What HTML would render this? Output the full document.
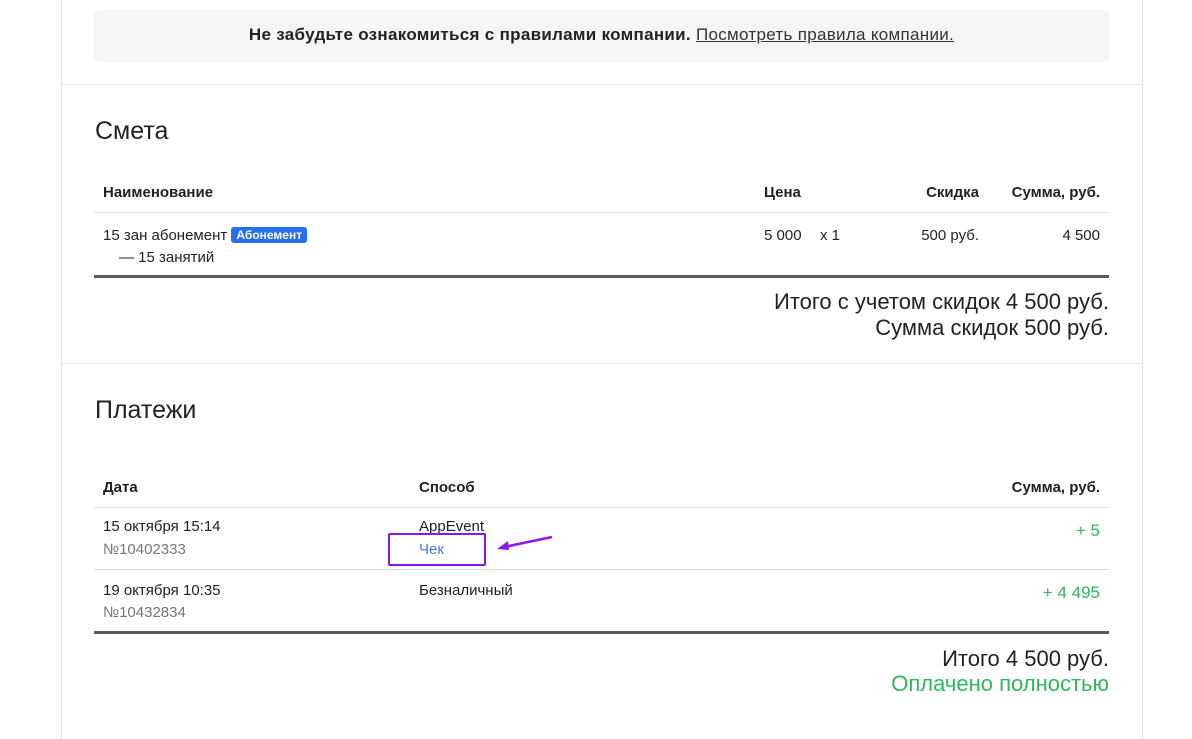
<!DOCTYPE html>
<html><head><meta charset="utf-8"><style>
body{margin:0;width:1192px;height:733px;overflow:hidden;background:#fff;font-family:"Liberation Sans",Arial,sans-serif;color:#222;position:relative}
.card{position:absolute;left:61px;top:-1px;width:1080px;height:740px;border-left:1px solid #e3e3e3;border-right:1px solid #e3e3e3}
.abs{position:absolute;white-space:nowrap}
.notice{position:absolute;left:94px;top:10px;width:1015px;height:52px;background:#f5f5f5;border-radius:4px;font-size:17px;letter-spacing:0.3px;line-height:50px;text-align:center;color:#222}
.hr{position:absolute;left:61px;width:1081px;height:1px;background:#e8e8e8}
h2{position:absolute;margin:0;font-weight:normal;font-size:25px;left:95px}
.th{font-weight:bold;font-size:15px}
.td{font-size:15px}
.line{position:absolute;left:94px;width:1015px;height:1px;background:#ddd}
.thick{position:absolute;left:94px;width:1015px;height:3px;background:#5a5a5a}
.big{font-size:22px;right:83px;text-align:right}
.green{color:#2fb85a}
</style></head><body>
<div class="card"></div>
<div class="notice"><b>Не забудьте ознакомиться с правилами компании.</b> <u style="color:#333">Посмотреть правила компании.</u></div>
<div class="hr" style="top:84px"></div>
<h2 style="top:117px">Смета</h2>
<div class="abs th" style="left:103px;top:184px">Наименование</div>
<div class="abs th" style="left:764px;top:184px">Цена</div>
<div class="abs th" style="right:213px;top:184px">Скидка</div>
<div class="abs th" style="right:92px;top:184px">Сумма, руб.</div>
<div class="line" style="top:212px"></div>
<div class="abs td" style="left:103px;top:227px">15 зан абонемент <span style="background:#2a6ef0;color:#fff;font-weight:bold;font-size:12px;padding:1px 5px;border-radius:3px;position:relative;top:-1px">Абонемент</span></div>
<div class="abs td" style="left:119px;top:249px">— 15 занятий</div>
<div class="abs td" style="left:764px;top:227px">5 000</div>
<div class="abs td" style="left:820px;top:227px">x 1</div>
<div class="abs td" style="right:213px;top:227px">500 руб.</div>
<div class="abs td" style="right:92px;top:227px">4 500</div>
<div class="thick" style="top:275px"></div>
<div class="abs big" style="top:289px">Итого с учетом скидок 4 500 руб.</div>
<div class="abs big" style="top:315px">Сумма скидок 500 руб.</div>
<div class="hr" style="top:363px"></div>
<h2 style="top:396px">Платежи</h2>
<div class="abs th" style="left:103px;top:479px">Дата</div>
<div class="abs th" style="left:419px;top:479px">Способ</div>
<div class="abs th" style="right:92px;top:479px">Сумма, руб.</div>
<div class="line" style="top:507px"></div>
<div class="abs td" style="left:103px;top:518px">15 октября 15:14</div>
<div class="abs td" style="left:103px;top:541px;color:#777">№10402333</div>
<div class="abs td" style="left:419px;top:518px">AppEvent</div>
<div class="abs td" style="left:419px;top:541px;color:#4a78e8">Чек</div>
<div class="abs" style="left:388px;top:533px;width:94px;height:29px;border:2px solid #8a16f0;border-radius:2px"></div>
<svg class="abs" style="left:494px;top:534px" width="62" height="20"><path d="M58 3 L10 13" stroke="#8a16f0" stroke-width="2.5"/><path d="M3 15 L14 7 L15 16 Z" fill="#8a16f0"/></svg>
<div class="abs green" style="right:92px;top:521px;font-size:17px">+ 5</div>
<div class="line" style="top:569px"></div>
<div class="abs td" style="left:103px;top:582px">19 октября 10:35</div>
<div class="abs td" style="left:103px;top:604px;color:#777">№10432834</div>
<div class="abs td" style="left:419px;top:582px">Безналичный</div>
<div class="abs green" style="right:92px;top:583px;font-size:17px">+ 4 495</div>
<div class="thick" style="top:631px"></div>
<div class="abs big" style="top:646px">Итого 4 500 руб.</div>
<div class="abs big green" style="top:671px">Оплачено полностью</div>
</body></html>
